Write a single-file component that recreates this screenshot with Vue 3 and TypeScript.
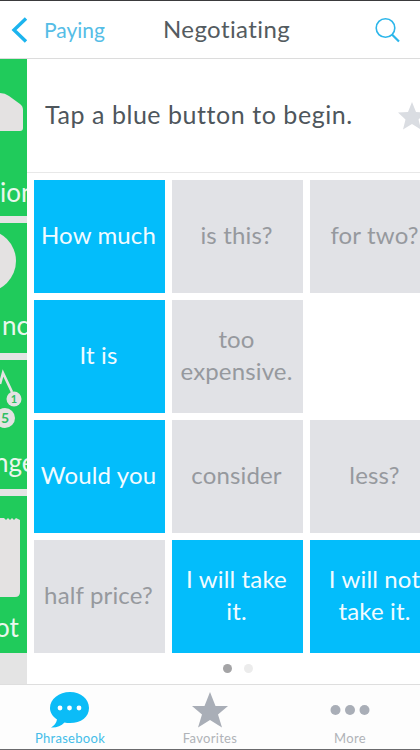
<script setup lang="ts">
interface Tile {
  lines: string[]
  active?: boolean
  empty?: boolean
}

const tiles: Tile[] = [
  { lines: ['How much'], active: true },
  { lines: ['is this?'] },
  { lines: ['for two?'] },
  { lines: ['It is'], active: true },
  { lines: ['too', 'expensive.'] },
  { lines: [], empty: true },
  { lines: ['Would you'], active: true },
  { lines: ['consider'] },
  { lines: ['less?'] },
  { lines: ['half price?'] },
  { lines: ['I will take', 'it.'], active: true },
  { lines: ['I will not', 'take it.'], active: true },
]
</script>

<template>
  <div class="app">
    <header class="nav">
      <div class="nav__back">
        <svg width="18" height="28" viewBox="0 0 18 28" fill="none" stroke="#1cb4ee" stroke-width="3.4">
          <polyline points="16,2.5 4,14 16,25.5" />
        </svg>
        <span>Paying</span>
      </div>
      <div class="nav__title">Negotiating</div>
      <svg class="nav__search" width="26" height="26" viewBox="0 0 26 26" fill="none" stroke="#2cb6ea" stroke-width="1.6">
        <circle cx="11.5" cy="11" r="9.3" />
        <path d="M18 17.5 25 24.5" stroke-width="2.2" />
      </svg>
    </header>

    <div class="body">
      <aside class="rail">
        <div class="rail__item rail__item--first">
          <svg class="rail__icon" width="27" height="40" viewBox="0 0 27 40">
            <path d="M0 0 Q5 0 9 3 L20 11 Q23 13 23 17 V35 Q23 38 20 38 H0 Z" fill="#e4e2e2" />
          </svg>
          <span class="rail__label">ion</span>
        </div>
        <div class="rail__item rail__item--circle">
          <svg class="rail__icon" width="17" height="62" viewBox="0 0 17 62">
            <circle cx="-15" cy="31" r="31" fill="#e4e2e2" />
          </svg>
          <span class="rail__label">nc</span>
        </div>
        <div class="rail__item rail__item--badges">
          <svg class="rail__icon" width="27" height="72" viewBox="0 0 27 72">
            <path d="M0 24 L3 13 L12 32" fill="none" stroke="#e4e2e2" stroke-width="2.6" />
            <circle cx="14" cy="39" r="7.5" fill="#e4e2e2" />
            <circle cx="5" cy="58" r="10" fill="#e4e2e2" />
            <text x="14" y="43" text-anchor="middle" class="rail__badge rail__badge--sm">1</text>
            <text x="5" y="63" text-anchor="middle" class="rail__badge">5</text>
          </svg>
          <span class="rail__label">nge</span>
        </div>
        <div class="rail__item rail__item--receipt">
          <svg class="rail__icon" width="20" height="80" viewBox="0 0 20 80">
            <path d="M0 1 H4 L6 3 L8 1 L10 3 L12 1 L14 3 L16 1 L20 3 V75 Q20 80 15 80 H0 Z" fill="#e4e2e2" />
          </svg>
          <span class="rail__label">ot</span>
        </div>
        <div class="rail__rest"></div>
      </aside>

      <main class="panel">
        <div class="prompt">
          <span>Tap a blue button to begin.</span>
          <svg class="prompt__star" width="28" height="28" viewBox="0 0 28 28">
            <polygon points="14,0 18,10 28,10.5 20.5,17.5 23,27.5 14,22 5,27.5 7.5,17.5 0,10.5 10,10" fill="#dadde2" />
          </svg>
        </div>
        <div class="grid">
          <div
            v-for="(tile, i) in tiles"
            :key="i"
            class="tile"
            :class="{ 'tile--active': tile.active, 'tile--empty': tile.empty }"
          >
            <span v-for="line in tile.lines" :key="line">{{ line }}</span>
          </div>
        </div>
        <div class="dots">
          <span class="dot dot--on"></span>
          <span class="dot"></span>
        </div>
      </main>
    </div>

    <footer class="tabs">
      <div class="tab tab--active">
        <svg width="42" height="38" viewBox="0 0 42 38">
          <path d="M21 1 C32 1 40 8 40 17 C40 26 32 32 21 32 C19 32 17 31.8 15.5 31.4 C12 35 7 37 2 36.5 C5 35 7.5 32 8 28.5 C3.5 25.5 1 21.5 1 17 C1 8 10 1 21 1 Z" fill="#0bbcf7" />
          <circle cx="11" cy="17" r="2.4" fill="#fff" />
          <circle cx="20.5" cy="17" r="2.4" fill="#fff" />
          <circle cx="30" cy="17" r="2.4" fill="#fff" />
        </svg>
        <span>Phrasebook</span>
      </div>
      <div class="tab">
        <svg width="38" height="38" viewBox="0 0 38 38">
          <polygon points="19,1 24.5,15 37,15 27,23.5 31,36.5 19,29 7,36.5 11,23.5 1,15 13.5,15" fill="#a9aeb7" />
        </svg>
        <span>Favorites</span>
      </div>
      <div class="tab">
        <svg width="40" height="38" viewBox="0 0 40 38">
          <circle cx="5.5" cy="19" r="5" fill="#a9aeb7" />
          <circle cx="20" cy="19" r="5" fill="#a9aeb7" />
          <circle cx="34.5" cy="19" r="5" fill="#a9aeb7" />
        </svg>
        <span>More</span>
      </div>
    </footer>
  </div>
</template>

<style>
html,
body {
  margin: 0;
  background: #fff;
}
</style>

<style scoped>
.app {
  width: 420px;
  height: 750px;
  display: flex;
  flex-direction: column;
  overflow: hidden;
  font-family: Lato, "Open Sans", sans-serif;
  border-top: 1px solid #3a3a3c;
  border-bottom: 1px solid #6a6a6c;
  box-sizing: border-box;
  background: #fff;
}
.nav {
  flex: 0 0 58px;
  box-sizing: border-box;
  display: flex;
  align-items: center;
  position: relative;
  border-bottom: 1px solid #dcdcdc;
}
.nav__back {
  display: flex;
  align-items: center;
  gap: 16px;
  padding-left: 10px;
  color: #55bde6;
  font-size: 21px;
}
.nav__title {
  position: absolute;
  left: 163px;
  top: 13px;
  color: #545b60;
  font-size: 24px;
  letter-spacing: 0.4px;
}
.nav__search {
  margin-left: auto;
  margin-right: 20px;
}
.body {
  flex: 1;
  display: flex;
  min-height: 0;
}
.rail {
  flex: 0 0 27px;
  display: flex;
  flex-direction: column;
  gap: 7px;
  background: #e4e4e4;
  overflow: hidden;
}
.rail__item {
  background: #20cb5b;
  position: relative;
  overflow: hidden;
  flex-shrink: 0;
}
.rail__item--first {
  height: 157px;
}
.rail__item--circle {
  height: 130px;
}
.rail__item--badges {
  height: 129px;
}
.rail__item--receipt {
  height: 157px;
}
.rail__rest {
  flex: 1;
}
.rail__icon {
  position: absolute;
  left: 0;
}
.rail__item--first .rail__icon {
  top: 34px;
}
.rail__item--circle .rail__icon {
  top: 7px;
}
.rail__item--badges .rail__icon {
  top: 0;
}
.rail__item--receipt .rail__icon {
  top: 21px;
}
.rail__label {
  position: absolute;
  color: #eaf7ee;
  font-size: 26px;
  line-height: 28px;
  white-space: nowrap;
}
.rail__item--first .rail__label {
  left: 0;
  bottom: 10px;
}
.rail__item--circle .rail__label {
  left: 2px;
  bottom: 14px;
}
.rail__item--badges .rail__label {
  left: -6px;
  bottom: 13px;
}
.rail__item--receipt .rail__label {
  left: -5px;
  bottom: 12px;
}
.rail__badge {
  fill: #2fbf63;
  font-size: 14px;
  font-weight: 700;
}
.rail__badge--sm {
  font-size: 11px;
}
.panel {
  flex: 1;
  min-width: 0;
  display: flex;
  flex-direction: column;
  overflow: hidden;
}
.prompt {
  flex: 0 0 114px;
  box-sizing: border-box;
  display: flex;
  align-items: center;
  padding: 0 0 4px 18px;
  color: #4e565c;
  font-size: 25px;
  letter-spacing: 0.55px;
  border-bottom: 1px solid #e8e8e8;
  position: relative;
  white-space: nowrap;
}
.prompt__star {
  position: absolute;
  left: 371px;
  top: 43px;
}
.grid {
  display: grid;
  grid-template-columns: repeat(3, 131px);
  grid-auto-rows: 113px;
  gap: 7px;
  padding: 7px 0 0 7px;
}
.tile {
  background: #e1e2e6;
  color: #96999e;
  font-size: 24px;
  line-height: 32px;
  letter-spacing: 0.15px;
  display: flex;
  flex-direction: column;
  align-items: center;
  justify-content: center;
  box-sizing: border-box;
  padding: 0 2px 3px 0;
  text-align: center;
  white-space: nowrap;
}
.tile--active {
  background: #03bdfb;
  color: #f2fbff;
}
.tile--empty {
  background: transparent;
}
.dots {
  display: flex;
  justify-content: center;
  gap: 12px;
  margin-top: 11px;
  padding-left: 28px;
}
.dot {
  width: 9px;
  height: 9px;
  border-radius: 50%;
  background: #ececec;
}
.dot--on {
  background: #a4a4a6;
}
.tabs {
  flex: 0 0 65px;
  box-sizing: border-box;
  display: grid;
  grid-template-columns: 140px 140px 140px;
  border-top: 1px solid #dedede;
  background: #fdfdfd;
}
.tab {
  display: flex;
  flex-direction: column;
  align-items: center;
  padding-top: 6px;
  color: #b0b3b8;
  font-size: 13px;
  line-height: 16px;
  letter-spacing: 0.3px;
}
.tab svg {
  margin-bottom: 1px;
}
.tab--active {
  color: #45bde9;
}
</style>
